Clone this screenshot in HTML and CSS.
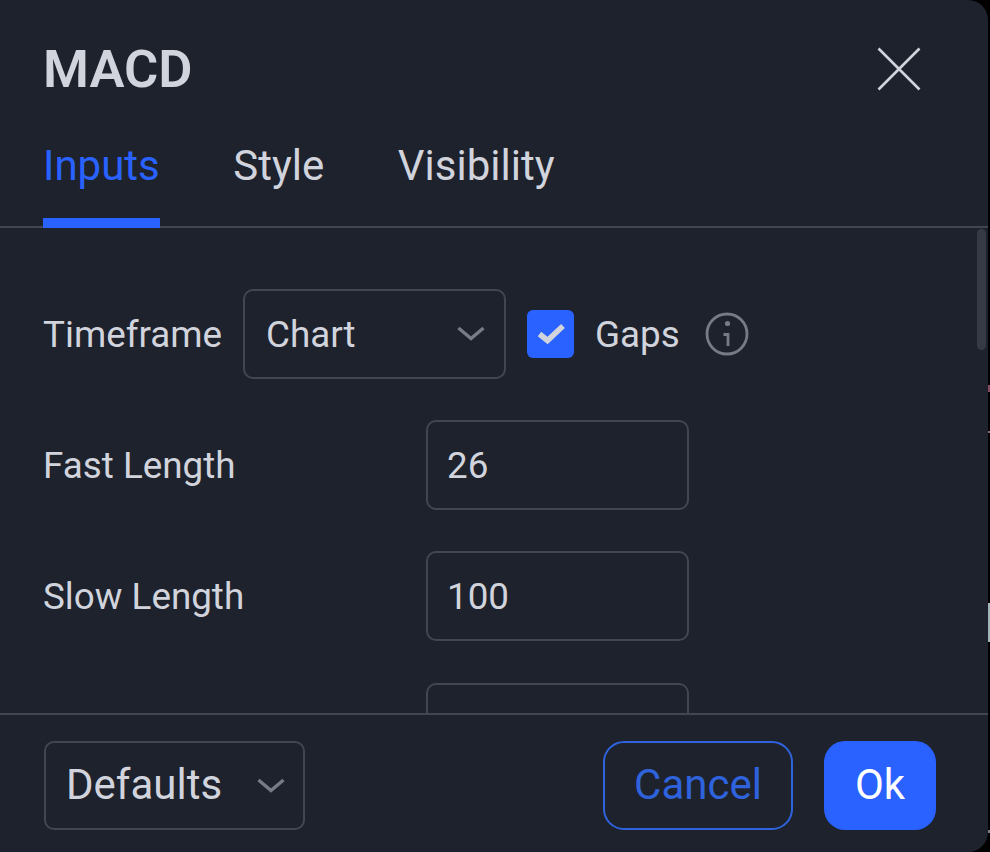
FILE: index.html
```html
<!DOCTYPE html>
<html>

<head>
  <title>MACD</title>
  <link rel="stylesheet" href="styles.css">
</head>

<body>
  <div class="dialog">
    <div class="dialog-head">
      <div class="dialog-title">MACD</div>
      <svg class="close-icon" width="44" height="44" viewBox="0 0 44 44">
        <path d="M1.5 1.5L42.5 42.5M42.5 1.5L1.5 42.5" />
      </svg>
    </div>

    <div class="tabs">
      <div class="tab active">Inputs</div>
      <div class="tab">Style</div>
      <div class="tab">Visibility</div>
    </div>

    <div class="dialog-body">
      <div class="scroll-thumb"></div>

      <div class="row">
        <div class="label label-short">Timeframe</div>
        <div class="field select-field">
          <span>Chart</span>
          <svg class="chevron" width="28" height="16" viewBox="0 0 28 16"><path d="M1.5 2L14 12.5L26.5 2" /></svg>
        </div>
        <div class="checkbox">
          <svg width="28" height="24" viewBox="0 0 28 24"><path d="M2.5 12L10.5 18.5L26 4" /></svg>
        </div>
        <div class="label">Gaps</div>
        <svg class="info-icon" width="44" height="44" viewBox="0 0 44 44">
          <circle cx="22" cy="22" r="20" />
          <circle class="info-dot" cx="22.5" cy="11.5" r="2.6" />
          <path d="M18.5 22.5H23V34" />
        </svg>
      </div>

      <div class="row">
        <div class="label label-wide">Fast Length</div>
        <div class="field number-field"><span>26</span></div>
      </div>

      <div class="row">
        <div class="label label-wide">Slow Length</div>
        <div class="field number-field"><span>100</span></div>
      </div>

      <div class="row">
        <div class="label label-wide"></div>
        <div class="field number-field"><span>12</span></div>
      </div>
    </div>

    <div class="dialog-foot">
      <div class="field defaults-field">
        <span>Defaults</span>
        <svg class="chevron" width="28" height="16" viewBox="0 0 28 16"><path d="M1.5 2L14 12.5L26.5 2" /></svg>
      </div>
      <div class="foot-buttons">
        <button class="btn btn-cancel">Cancel</button>
        <button class="btn btn-ok">Ok</button>
      </div>
    </div>
  </div>

  <!-- bit of the chart behind the dialog -->
  <div class="chart-edge"></div>
</body>

</html>
```

FILE: styles.css
```css
* {
  box-sizing: border-box;
}

html,
body {
  height: 100%;
}

body {
  margin: 0;
  background: #000;
  font-family: Roboto, "Liberation Sans", sans-serif;
  overflow: hidden;
}

.chart-edge {
  position: absolute;
  top: 0;
  right: 0;
  width: 2px;
  height: 852px;
  background: linear-gradient(to bottom,
      transparent 385px, #8a4a5e 385px, #8a4a5e 392px, transparent 392px,
      transparent 431px, #8a6a7a 431px, #8a6a7a 433px, transparent 433px,
      transparent 603px, #9fb5b8 603px, #9fb5b8 642px, transparent 642px,
      transparent 830px, #787b86 830px, #787b86 833px, transparent 833px);
}

.dialog {
  width: 988px;
  height: 852px;
  background: #1e222d;
  border-radius: 0 20px 20px 0;
  color: #d1d4dc;
  display: flex;
  flex-direction: column;
}

.dialog-head {
  height: 134px;
  padding: 47px 67px 0 43px;
  display: flex;
  justify-content: space-between;
  align-items: flex-start;
  flex-shrink: 0;
}

.dialog-title {
  font-size: 52.5px;
  font-weight: 600;
  line-height: 44px;
}

.close-icon {
  stroke: #d1d4dc;
  stroke-width: 2.6;
  fill: none;
}

.tabs {
  height: 94px;
  padding: 0 43px;
  display: flex;
  gap: 73.5px;
  border-bottom: 2px solid #434651;
  flex-shrink: 0;
}

.tab {
  height: 94px;
  font-size: 42px;
  line-height: 64px;
}

.tab.active {
  color: #2962ff;
  border-bottom: 10px solid #2962ff;
}

.dialog-body {
  flex: 1;
  min-height: 0;
  padding: 61px 0 0 43px;
  overflow: hidden;
  position: relative;
}

.scroll-thumb {
  position: absolute;
  top: 1px;
  right: 2px;
  width: 9px;
  height: 121px;
  border-radius: 5px;
  background: #363a45;
}

.row {
  height: 90px;
  margin-bottom: 41.2px;
  display: flex;
  align-items: center;
  font-size: 36.8px;
}

.label-short {
  width: 200px;
}

.label-wide {
  width: 383px;
}

.field {
  width: 263px;
  height: 90px;
  padding: 0 21px;
  border: 2px solid #434651;
  border-radius: 10px;
  display: flex;
  align-items: center;
  justify-content: space-between;
}

.number-field {
  padding: 0 19px;
}

.chevron {
  stroke: #787b86;
  stroke-width: 3.4;
  fill: none;
}

.select-field {
  margin-right: 21px;
  padding-right: 19px;
}

.checkbox {
  width: 47px;
  height: 48px;
  margin-right: 21px;
  background: #2962ff;
  border-radius: 6px;
  display: flex;
  align-items: center;
  justify-content: center;
}

.checkbox svg {
  stroke: #d1d4dc;
  stroke-width: 5.5;
  fill: none;
}

.info-icon {
  margin-left: 25px;
  stroke: #787b86;
  stroke-width: 2.8;
  fill: none;
}

.info-dot {
  fill: #787b86;
  stroke: none;
}

.dialog-foot {
  height: 139px;
  padding: 26px 52px 0 44px;
  border-top: 2px solid #434651;
  display: flex;
  align-items: flex-start;
  justify-content: space-between;
  flex-shrink: 0;
}

.defaults-field {
  width: 261px;
  height: 89px;
  font-size: 42px;
  padding: 0 18px 3px 20px;
}

.defaults-field .chevron {
  margin-top: 3px;
}

.foot-buttons {
  display: flex;
  gap: 31px;
}

.btn {
  height: 89px;
  border-radius: 21px;
  font-family: inherit;
  font-size: 42px;
  padding: 0 0 3px;
}

.btn-cancel {
  width: 190px;
  background: none;
  border: 2px solid #2f63dd;
  color: #2f63dd;
}

.btn-ok {
  width: 112px;
  background: #2962ff;
  border: none;
  color: #fff;
}
```
